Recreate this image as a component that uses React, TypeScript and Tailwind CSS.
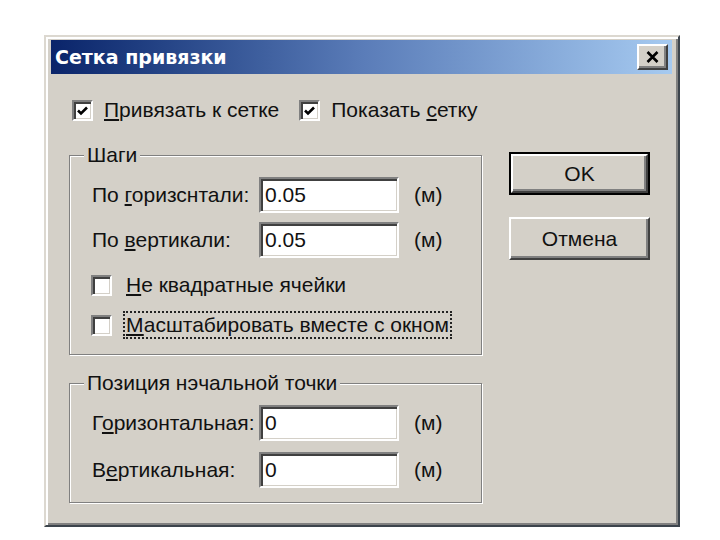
import React from 'react';

const font = { fontFamily: '"Liberation Sans", Arial, sans-serif' };

const sunken =
  'border-2 border-t-[#808080] border-l-[#808080] border-r-white border-b-white shadow-[inset_2px_2px_0_#404040,inset_-1px_-1px_0_#d4d0c8]';
const raised =
  'border-2 border-t-white border-l-white border-r-[#404040] border-b-[#404040] shadow-[inset_-2px_-2px_0_#808080]';

const Check = ({ checked }: { checked?: boolean }) => (
  <div className={`w-[21px] h-[21px] bg-white shrink-0 flex items-center justify-center ${sunken}`}>
    {checked && (
      <svg width="13" height="13" viewBox="0 0 13 13">
        <path d="M2 6.5 L5 9.5 L11 3.5" fill="none" stroke="#000" strokeWidth="2.6" />
      </svg>
    )}
  </div>
);

const Field = ({ label, value }: { label: React.ReactNode; value: string }) => (
  <div className="flex items-center h-[36px]">
    <span className="w-[167px] leading-[24px]">{label}</span>
    <div className={`w-[140px] h-[36px] bg-white flex items-center pl-[4px] ${sunken}`}>
      <span className="leading-[24px]">{value}</span>
    </div>
    <span className="ml-[15px] leading-[24px]">(м)</span>
  </div>
);

const Group = ({ title, className, children }: { title: string; className: string; children: React.ReactNode }) => (
  <div className={`relative border border-[#808080] shadow-[inset_1px_1px_0_#fff,1px_1px_0_#fff] ${className}`}>
    <span className="absolute -top-[13px] left-[14px] px-[3px] bg-[#d4d0c8] leading-[24px]">{title}</span>
    {children}
  </div>
);

export default function App() {
  return (
    <div className="w-[720px] h-[540px] bg-white pt-[35px] pl-[44px] text-[21px] text-[#111]" style={font}>
      <div className="w-[636px] h-[492px] bg-[#d4d0c8] border-2 border-t-[#dcd8d0] border-l-[#dcd8d0] border-r-[#3c444c] border-b-[#3c444c] shadow-[inset_2px_2px_0_#fff,inset_-2px_-2px_0_#808080] pt-[3px] pl-[5px] pr-[6px] flex flex-col">
        {/* title bar */}
        <div className="h-[34px] flex items-center justify-between pl-[4px] pr-[4px] bg-gradient-to-r from-[#0a246a] via-[#5a7cb8] to-[#a6caf0]">
          <span className="text-white font-bold text-[19px] leading-none" style={{ fontFamily: '"DejaVu Sans", Verdana, sans-serif' }}>
            Сетка привязки
          </span>
          <div className={`w-[31px] h-[26px] bg-[#d4d0c8] flex items-center justify-center ${raised}`}>
            <svg width="13" height="12" viewBox="0 0 13 12">
              <path d="M1.5 1 L11.5 11 M11.5 1 L1.5 11" stroke="#000" strokeWidth="2.6" />
            </svg>
          </div>
        </div>

        <div className="flex">
          {/* left column */}
          <div className="ml-[18px] w-[413px] flex flex-col">
            <div className="mt-[26px] pl-[3px] flex items-center h-[20px]">
              <Check checked />
              <span className="ml-[11px] leading-[24px]">
                <u>П</u>ривязать к сетке
              </span>
              <div className="ml-[20px]">
                <Check checked />
              </div>
              <span className="ml-[11px] leading-[24px]">
                Показать <u>с</u>етку
              </span>
            </div>

            <Group title="Шаги" className="mt-[35px] h-[200px] pt-[21px] pl-[22px]">
              <Field label={<>По <u>г</u>оризснтали:</>} value="0.05" />
              <div className="mt-[9px]">
                <Field label={<>По <u>в</u>ертикали:</>} value="0.05" />
              </div>
              <div className="mt-[12px] flex items-center h-[30px] -ml-[1px]">
                <Check />
                <span className="ml-[11px] border-2 border-transparent px-[1px] leading-[24px]">
                  <u>Н</u>е квадратные ячейки
                </span>
              </div>
              <div className="mt-[10px] flex items-center h-[30px] -ml-[1px]">
                <Check />
                <span className="ml-[11px] border-2 border-dotted border-[#222] px-[1px] leading-[24px]">
                  <u>М</u>асштабировать вместе с окном
                </span>
              </div>
            </Group>

            <Group title="Позиция нэчальной точки" className="mt-[28px] h-[120px] pt-[21px] pl-[22px]">
              <Field label={<>Г<u>о</u>ризонтальная:</>} value="0" />
              <div className="mt-[11px]">
                <Field label={<>В<u>е</u>ртикальная:</>} value="0" />
              </div>
            </Group>
          </div>

          {/* buttons */}
          <div className="ml-[27px] w-[141px] flex flex-col">
            <div className="mt-[78px] h-[43px] border-2 border-black">
              <div className={`h-full flex items-center justify-center ${raised}`}>OK</div>
            </div>
            <div className={`mt-[22px] h-[43px] flex items-center justify-center ${raised}`}>Отмена</div>
          </div>
        </div>
      </div>
    </div>
  );
}
